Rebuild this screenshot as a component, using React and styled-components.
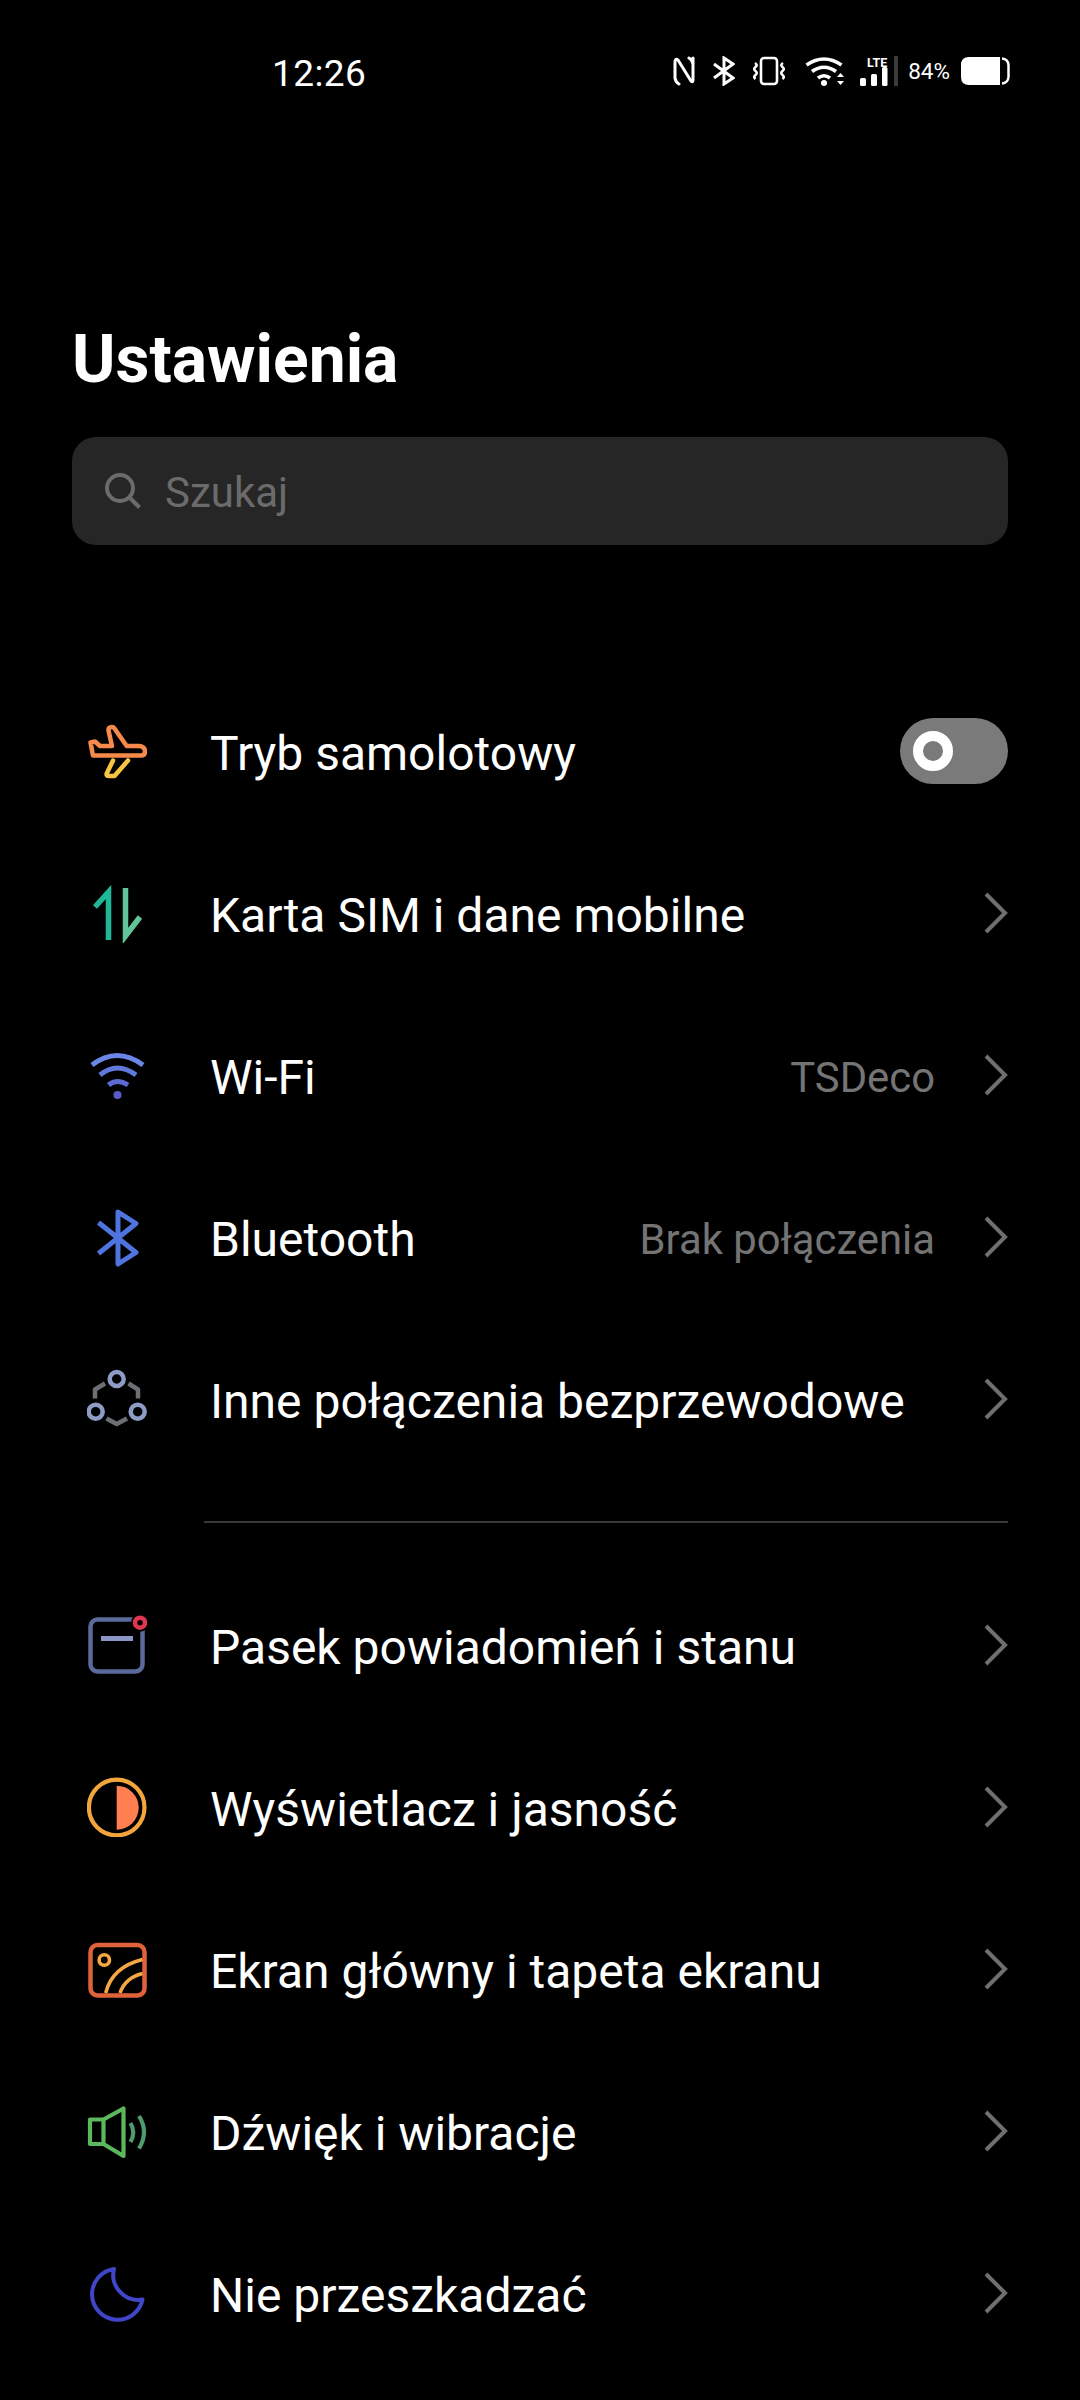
import React from "react";
import styled, { createGlobalStyle } from "styled-components";

const Global = createGlobalStyle`
  html, body { margin: 0; padding: 0; background: #000; }
  body { width: 1080px; height: 2400px; overflow: hidden; font-family: Roboto, "Liberation Sans", sans-serif; -webkit-font-smoothing: antialiased; }
`;

const Page = styled.div`
  width: 1080px;
  height: 2400px;
  background: #000;
  color: #fff;
  overflow: hidden;
  display: flex;
  flex-direction: column;
`;

const StatusBar = styled.div`
  padding: 47px 69px 0 272px;
  box-sizing: border-box;
  height: 116px;
  display: flex;
  align-items: flex-start;
  justify-content: space-between;
`;

const Clock = styled.span`
  font-size: 37px;
  line-height: 54px;
  letter-spacing: 0.4px;
  font-weight: 400;
`;

const StatusIcons = styled.div`
  display: flex;
  align-items: center;
  height: 54px;
  margin-top: -3px;
`;

const StatusGlyph = styled.svg`
  display: block;
  flex: none;
  margin-left: ${(p) => p.$gap}px;
`;

const SignalBox = styled.div`
  position: relative;
  width: 28px;
  height: 30px;
  margin-left: 15px;
`;

const LteLabel = styled.span`
  position: absolute;
  top: 0;
  right: 1px;
  font-size: 12.5px;
  line-height: 13px;
  font-weight: 700;
`;

const Percent = styled.span`
  font-size: 22.5px;
  line-height: 54px;
  margin-left: 10px;
`;

const Title = styled.h1`
  margin: 0;
  padding: 202px 0 0 72px;
  font-size: 66px;
  line-height: 84px;
  font-weight: 700;
`;

const SearchBar = styled.div`
  margin: 35px 72px 0;
  height: 108px;
  border-radius: 24px;
  background: #262626;
  display: flex;
  align-items: center;
  padding-left: 33px;
  box-sizing: border-box;
`;

const SearchText = styled.span`
  margin-left: 24px;
  padding-top: 4px;
  font-size: 42px;
  line-height: 50px;
  color: #6b6b6b;
`;

const List = styled.div`
  margin-top: 125px;
  display: flex;
  flex-direction: column;
`;

const Row = styled.div`
  height: 162px;
  display: flex;
  align-items: center;
  padding: 0 72px 0 87px;
`;

const Icon = styled.svg`
  display: block;
  flex: none;
  width: 60px;
  height: 60px;
  fill: none;
  stroke-linecap: round;
  stroke-linejoin: round;
`;

const Label = styled.span`
  margin-left: 63px;
  padding-top: 5px;
  flex: 1;
  font-size: 48px;
  line-height: 60px;
  white-space: nowrap;
`;

const Value = styled.span`
  padding-top: 5px;
  font-size: 41.8px;
  line-height: 60px;
  color: #747474;
  margin-right: 49px;
`;

const Chevron = styled.svg`
  display: block;
  flex: none;
  width: 24px;
  height: 42px;
  fill: none;
  stroke: #6f6f6f;
  stroke-width: 4;
`;

const Toggle = styled.div`
  width: 108px;
  height: 66px;
  border-radius: 33px;
  background: #7a7a7a;
  display: flex;
  align-items: center;
  padding-left: 13px;
  box-sizing: border-box;
`;

const Knob = styled.div`
  width: 40px;
  height: 40px;
  border-radius: 50%;
  border: 10px solid #fff;
  box-sizing: border-box;
`;

const Divider = styled.div`
  height: 2px;
  margin: 41px 72px 41px 204px;
  background: #383838;
`;

const Arrow = () => (
  <Chevron viewBox="0 0 24 42">
    <path d="M2 2 L21 21 L2 40" />
  </Chevron>
);

const Plane = () => (
  <Icon viewBox="0 0 60 60" strokeWidth="4.5">
    <path stroke="#f58a4b" d="M3.5 21.5 L8 20.5 L13 25 H25 L21.5 9.5 Q21 6 25 6 Q27 6 28.5 9 L39.7 25 H52 Q58 25.5 58 30.5 Q58 34.5 54 34.5 H6 Z" />
    <path stroke="#f7c443" d="M26 39.5 L19.5 53 Q19.5 55 22 55 H27.5 L41 39.5" />
  </Icon>
);

const DataArrows = () => (
  <Icon viewBox="0 0 60 60" strokeWidth="5.5">
    <path stroke="#1fb79a" strokeLinecap="butt" strokeLinejoin="miter" d="M8 24 L21.5 9 V57" />
    <path stroke="#63c49a" strokeLinecap="butt" strokeLinejoin="miter" d="M38.5 5 V53 L53 34" />
  </Icon>
);

const Wifi = () => (
  <Icon viewBox="0 0 60 60" strokeWidth="5">
    <path stroke="#6c86e6" strokeLinecap="butt" d="M5 20 Q30 1 56 20" />
    <path stroke="#6279dc" strokeLinecap="butt" d="M13 30 Q30 16 49 30" />
    <path stroke="#5d6ad4" strokeLinecap="butt" d="M21.5 40 Q30 33 41 40" />
    <circle cx="30.5" cy="50" r="4" fill="#5a5bc8" stroke="none" />
  </Icon>
);

const BluetoothIcon = () => (
  <Icon viewBox="0 0 60 60" strokeWidth="5">
    <path stroke="#4f74e0" strokeLinecap="butt" d="M11.5 15.5 L49 45.5 L31 57 V5 L49 16.5 L11.5 46.5" />
  </Icon>
);

const Wireless = () => (
  <Icon viewBox="0 0 60 60" strokeWidth="4.5">
    <path stroke="#6c7074" strokeLinecap="butt" d="M8 29.5 V20.5 L18 14.5 M51 29.5 V20.5 L41.5 14.5 M19.5 49.5 L29.7 55 L40 49.5" />
    <circle stroke="#8e9bc4" cx="29.7" cy="10" r="7" />
    <circle stroke="#8e9bc4" cx="8.7" cy="42.7" r="7" />
    <circle stroke="#8e9bc4" cx="50.7" cy="42.7" r="7" />
  </Icon>
);

const Notify = () => (
  <Icon viewBox="0 0 60 60" strokeWidth="4.5">
    <rect stroke="#5a6a9c" x="3.5" y="4.5" width="52" height="52" rx="7" />
    <path stroke="#8b96c6" strokeWidth="5" strokeLinecap="butt" d="M14 23.5 H46" />
    <circle fill="#000" stroke="none" cx="53" cy="7.7" r="9" />
    <circle stroke="#e0364f" strokeWidth="4.5" cx="53" cy="7.7" r="5" />
  </Icon>
);

const Display = () => (
  <Icon viewBox="0 0 60 60" strokeWidth="4.2">
    <circle stroke="#f2a53d" cx="29.7" cy="30.5" r="27.8" />
    <path fill="#ff7f50" stroke="none" d="M29.7 8.7 A22 22 0 0 1 29.7 52.7 Z" />
  </Icon>
);

const Wallpaper = () => (
  <Icon viewBox="0 0 60 60" strokeWidth="4.5">
    <rect stroke="#e0623a" x="3.5" y="6" width="54" height="50.5" rx="7" />
    <circle stroke="#f5a742" strokeWidth="3.6" cx="17.3" cy="21" r="5.2" />
    <path stroke="#f5a742" strokeWidth="3.6" strokeLinecap="butt" d="M18.7 54 Q25 28 55.5 20.5 M33 54 Q38 39 55.5 34.5" />
  </Icon>
);

const Speaker = () => (
  <Icon viewBox="0 0 60 60" strokeWidth="4.2">
    <path stroke="#5cb85c" d="M3 18.5 H16.5 V43 H3 Z M16.5 18.5 L36.5 7.5 V55 L16.5 43" />
    <path stroke="#4f9a6e" strokeLinecap="butt" d="M43.5 22 Q49 31.5 43.5 41 M52 15 Q62 31 52 47.5" />
  </Icon>
);

const Moon = () => (
  <Icon viewBox="0 0 60 60" strokeWidth="4">
    <path stroke="#3f46c8" d="M27 6 A25.5 25.5 0 1 0 55.5 36.5 A25 25 0 0 1 27 6 Z" />
  </Icon>
);

const Row1 = [
  { icon: <DataArrows />, label: "Karta SIM i dane mobilne" },
  { icon: <Wifi />, label: "Wi-Fi", value: "TSDeco" },
  { icon: <BluetoothIcon />, label: "Bluetooth", value: "Brak połączenia" },
  { icon: <Wireless />, label: "Inne połączenia bezprzewodowe" },
];

const Row2 = [
  { icon: <Notify />, label: "Pasek powiadomień i stanu" },
  { icon: <Display />, label: "Wyświetlacz i jasność" },
  { icon: <Wallpaper />, label: "Ekran główny i tapeta ekranu" },
  { icon: <Speaker />, label: "Dźwięk i wibracje" },
  { icon: <Moon />, label: "Nie przeszkadzać" },
];

const NavRow = ({ icon, label, value }) => (
  <Row>
    {icon}
    <Label>{label}</Label>
    {value && <Value>{value}</Value>}
    <Arrow />
  </Row>
);

export default function App() {
  return (
    <Page>
      <Global />
      <StatusBar>
        <Clock>12:26</Clock>
        <StatusIcons>
          <StatusGlyph $gap={0} width="22" height="30" viewBox="0 0 22 30" fill="none" stroke="#fff" strokeWidth="3" strokeLinejoin="round" strokeLinecap="round">
            <path d="M2 22 V6 Q2 2 5 4 L18 25 Q20 27 20 24 V2 M2 22 Q2.5 26 6 28 M20 8 Q19.5 4 16 2" />
          </StatusGlyph>
          <StatusGlyph $gap={18} width="22" height="30" viewBox="0 0 22 30" fill="none" stroke="#fff" strokeWidth="3">
            <path d="M1 8 L20 22 L11 28 V2 L20 8 L1 22" />
          </StatusGlyph>
          <StatusGlyph $gap={18} width="32" height="30" viewBox="0 0 32 30" fill="none" stroke="#fff" strokeWidth="2.6">
            <rect x="8" y="2" width="16" height="26" rx="3" />
            <path d="M2 7 Q5 9 2.5 11 T2.5 15 T2.5 19 T2.5 23 M30 7 Q27 9 29.5 11 T29.5 15 T29.5 19 T29.5 23" />
          </StatusGlyph>
          <StatusGlyph $gap={20} width="40" height="30" viewBox="0 0 40 30" fill="#fff" stroke="none">
            <g fill="none" stroke="#fff" strokeWidth="3.6">
              <path d="M1.5 9 Q19 -3 36.5 9" />
              <path d="M7 15.5 Q19 7 31 15.5" />
              <path d="M13 22 Q19 17.5 25 22" />
            </g>
            <circle cx="19" cy="27" r="3" />
            <path d="M35.5 17 L39 21 H32 Z M35.5 29 L32 25 H39 Z" />
          </StatusGlyph>
          <SignalBox>
            <LteLabel>LTE</LteLabel>
            <StatusGlyph $gap={0} width="28" height="30" viewBox="0 0 28 30" fill="#fff">
              <rect x="0" y="22" width="6" height="8" rx="1.5" />
              <rect x="11" y="18" width="6" height="12" rx="1.5" />
              <rect x="22" y="11" width="5.5" height="19" rx="1.5" />
            </StatusGlyph>
          </SignalBox>
          <StatusGlyph $gap={6} width="4" height="30" viewBox="0 0 4 30" fill="#3a3a3a">
            <rect width="4" height="30" />
          </StatusGlyph>
          <Percent>84%</Percent>
          <StatusGlyph $gap={11} width="50" height="28" viewBox="0 0 50 28" fill="#fff">
            <path d="M8 0 H39 V28 H8 Q0 28 0 20 V8 Q0 0 8 0 Z" />
            <path fill="none" stroke="#fff" strokeWidth="2.5" d="M41 1.5 Q47 2 47.5 8 V20 Q47 26 41 26.5" />
          </StatusGlyph>
        </StatusIcons>
      </StatusBar>
      <Title>Ustawienia</Title>
      <SearchBar>
        <svg width="36" height="36" viewBox="0 0 36 36" fill="none" stroke="#6b6b6b" strokeWidth="4">
          <circle cx="15" cy="15" r="13" />
          <path d="M24.5 24.5 L34.5 34.5" />
        </svg>
        <SearchText>Szukaj</SearchText>
      </SearchBar>
      <List>
        <Row>
          <Plane />
          <Label>Tryb samolotowy</Label>
          <Toggle>
            <Knob />
          </Toggle>
        </Row>
        {Row1.map((r) => (
          <NavRow key={r.label} {...r} />
        ))}
        <Divider />
        {Row2.map((r) => (
          <NavRow key={r.label} {...r} />
        ))}
      </List>
    </Page>
  );
}
